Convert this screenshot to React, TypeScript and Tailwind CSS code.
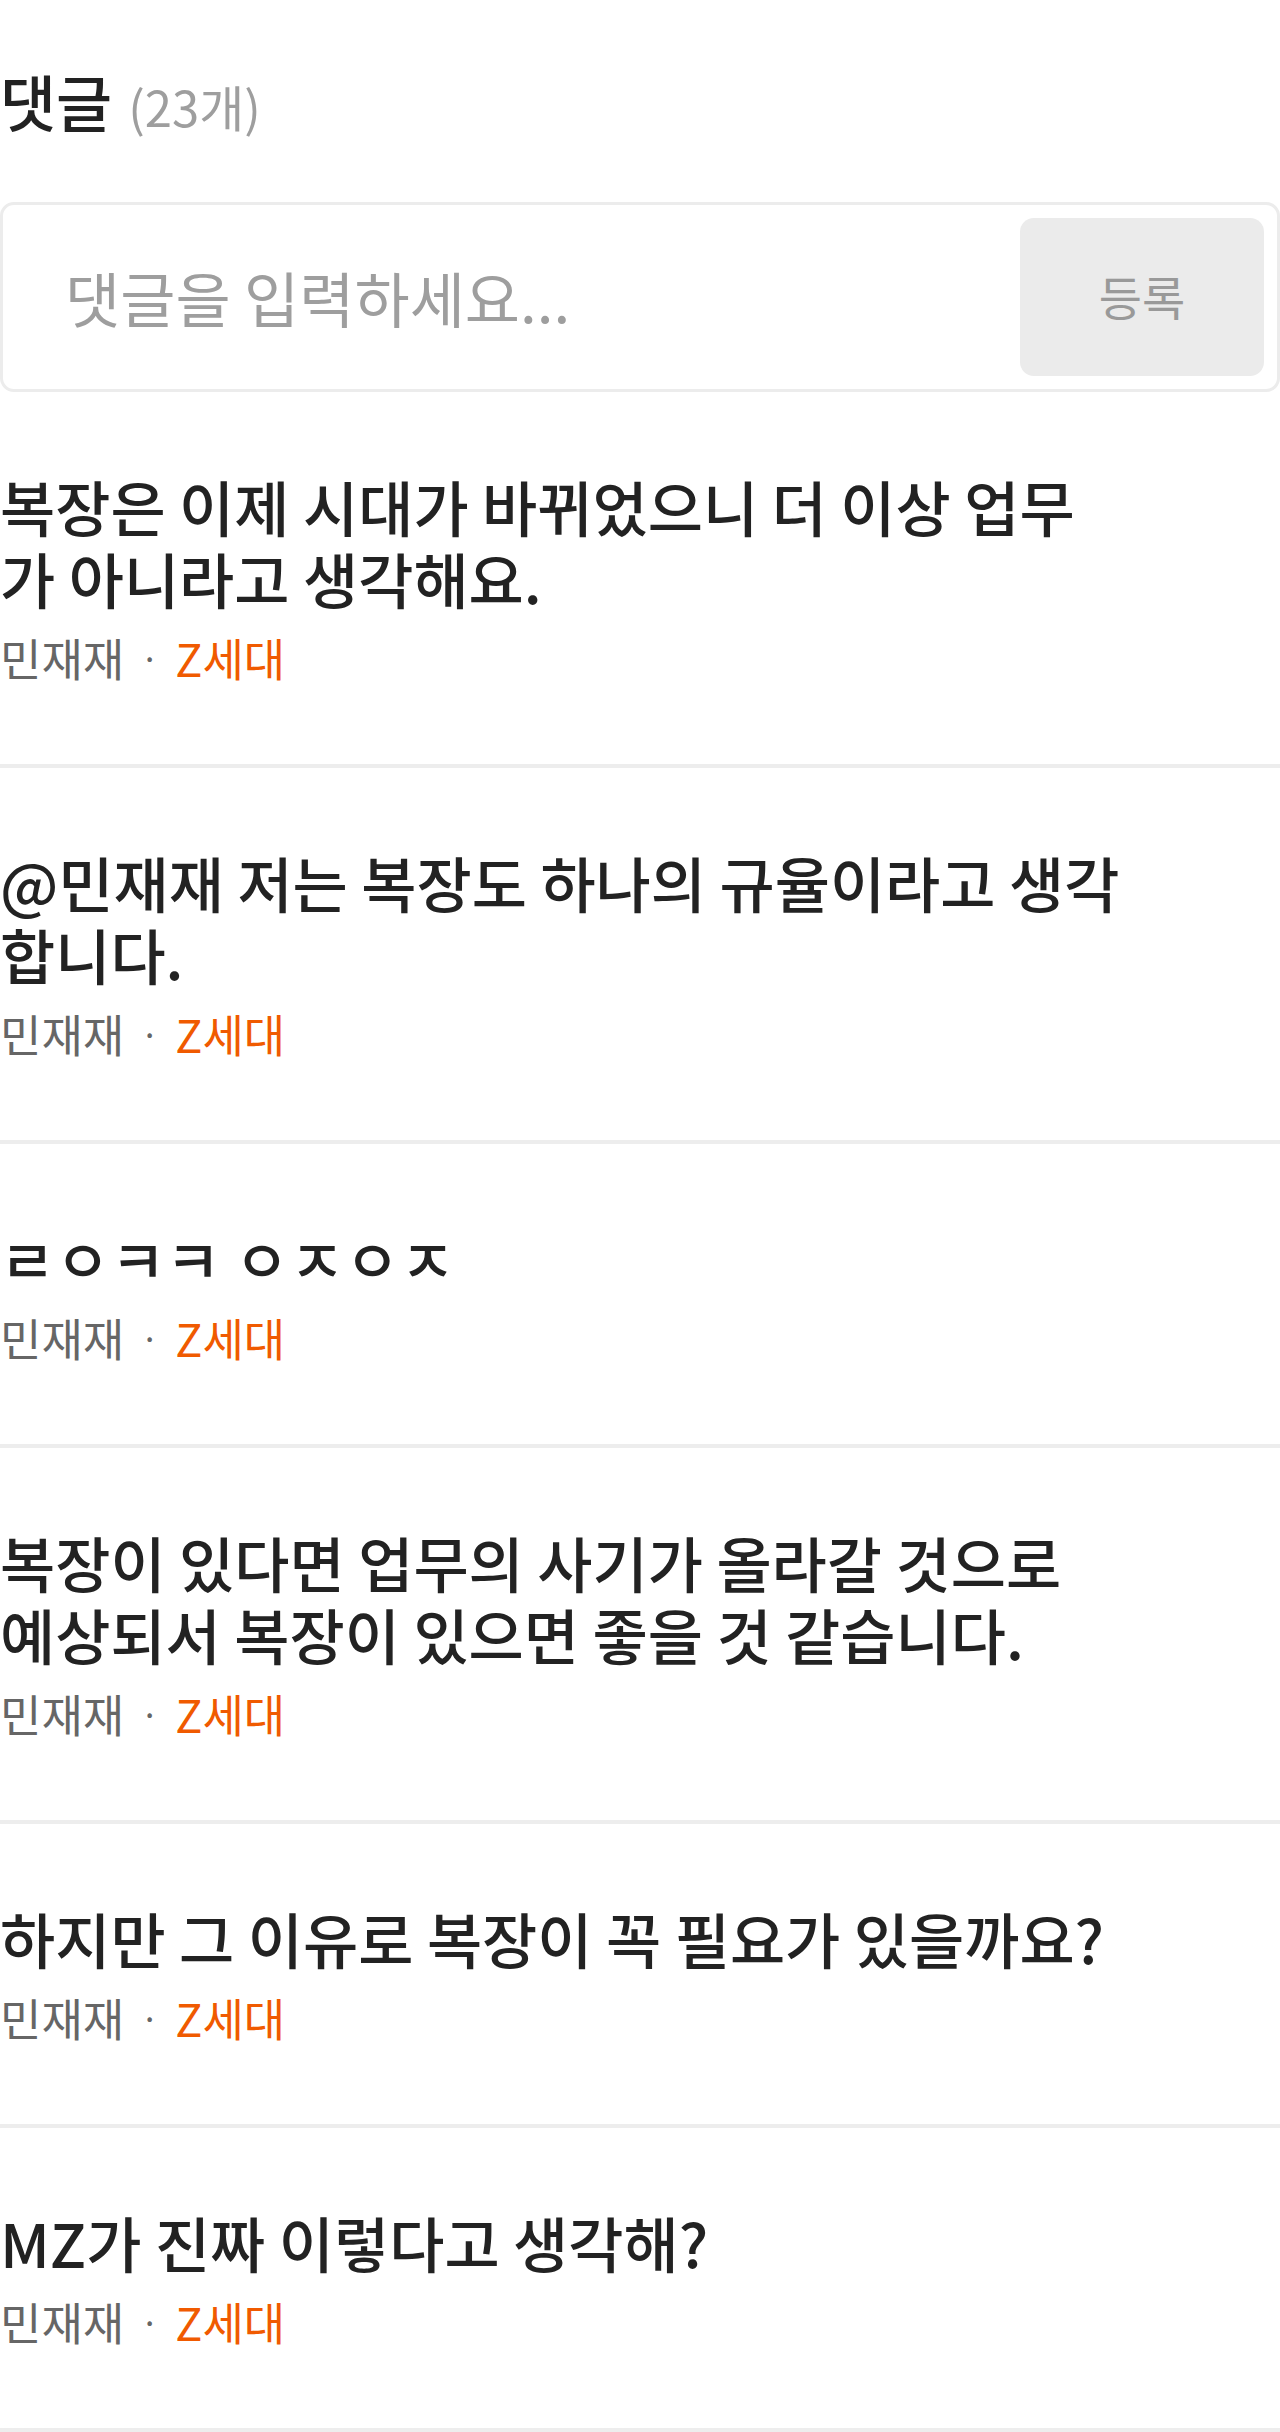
import { useState } from "react";

const comments = [
  { text: "복장은 이제 시대가 바뀌었으니 더 이상 업무가 아니라고 생각해요.", author: "민재재", gen: "Z세대" },
  { text: "@민재재 저는 복장도 하나의 규율이라고 생각합니다.", author: "민재재", gen: "Z세대" },
  { text: "ㄹㅇㅋㅋ ㅇㅈㅇㅈ", author: "민재재", gen: "Z세대" },
  { text: "복장이 있다면 업무의 사기가 올라갈 것으로 예상되서 복장이 있으면 좋을 것 같습니다.", author: "민재재", gen: "Z세대" },
  { text: "하지만 그 이유로 복장이 꼭 필요가 있을까요?", author: "민재재", gen: "Z세대" },
  { text: "MZ가 진짜 이렇다고 생각해?", author: "민재재", gen: "Z세대" },
];

const App = () => {
  const [value, setValue] = useState("");

  return (
    <div className="w-[1280px] min-h-[2432px] bg-white font-['Noto_Sans_CJK_KR','Noto_Sans',sans-serif] text-[#222]">
      <section>
        <div className="flex items-baseline pt-[65px] pb-[59px]">
          <h2 className="text-[61px] leading-[72px] font-medium">댓글</h2>
          <span className="ml-[16px] text-[49px] text-[#9e9e9e]">(23개)</span>
        </div>

        <div className="flex h-[190px] rounded-[14px] border-[3px] border-[#ececec] p-[13px]">
          <input
            value={value}
            onChange={(e) => setValue(e.target.value)}
            placeholder="댓글을 입력하세요..."
            className="flex-1 min-w-0 pl-[49px] text-[60px] text-[#222] outline-none placeholder:text-[#9e9e9e]"
          />
          <button className="w-[244px] rounded-[14px] bg-[#ebebeb] text-[47px] text-[#999]">
            등록
          </button>
        </div>

        <ul>
          {comments.map((c, i) => (
            <li key={i} className="pt-[78px] pb-[75px] border-b-4 border-[#ededed]">
              <p className="max-w-[1122px] text-[60px] leading-[72px] font-medium text-[#222]">{c.text}</p>
              <div className="mt-[12px] flex items-center text-[45px] leading-[63px]">
                <span className="text-[#666]">{c.author}</span>
                <span className="mx-[16px] text-[#666] text-[34px]">·</span>
                <span className="text-[#f05a00]">{c.gen}</span>
              </div>
            </li>
          ))}
        </ul>
      </section>
    </div>
  );
};

export default App;
